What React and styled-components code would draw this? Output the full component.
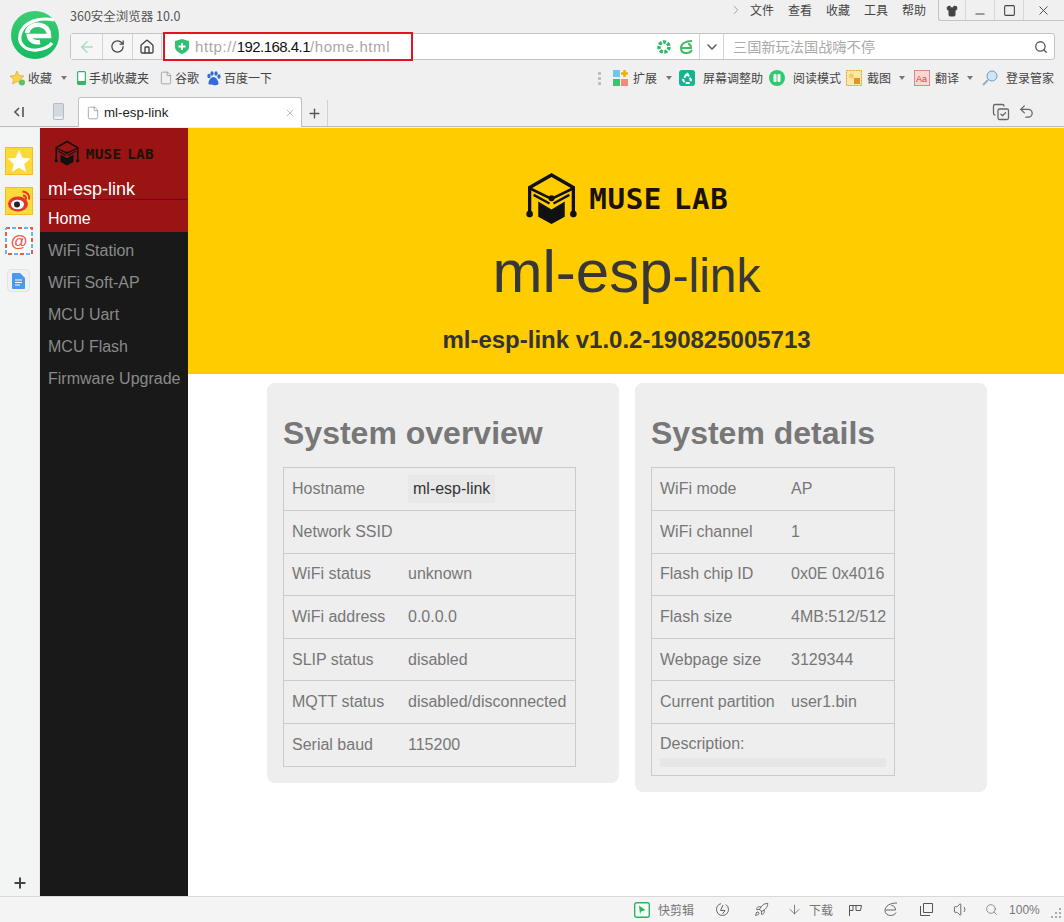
import React from "react";
import styled, { createGlobalStyle } from "styled-components";
import {
  ArrowLeft, RotateCw, Home as HomeIcon, ChevronDown, ChevronRight, Search, Plus, X, Minus, Square, Shirt,
  File, Undo2, ArrowDown, Rocket, Volume1, CopyCheck,
} from "lucide-react";

const Global = createGlobalStyle`
  html, body { margin: 0; padding: 0; background: #fff; }
  * { box-sizing: border-box; }
  body { font-family: "Liberation Sans", Arial, sans-serif; overflow: hidden; }
`;

const CJK = `"Noto Sans CJK SC", "Liberation Sans", sans-serif`;

const Shell = styled.div`
  width: 1064px; height: 922px; display: flex; flex-direction: column; overflow: hidden;
`;
const Chrome = styled.header`
  height: 128px; flex: none; background: #f0f0f0; display: flex; flex-direction: column;
`;
const TopArea = styled.div`
  display: flex; height: 61px; padding-left: 11px;
`;
const BrandMark = styled.svg`
  width: 48px; height: 48px; margin-top: 11px; flex: none;
`;
const TopColumn = styled.div`
  margin-left: 11px; flex: 1; display: flex; flex-direction: column; min-width: 0;
`;
const TitleRow = styled.div`
  height: 33px; display: flex; align-items: flex-start; justify-content: space-between;
`;
const Title = styled.div`
  font: 12.5px/14px ${CJK}; color: #555; margin-top: 9px;
`;
const MenuArea = styled.div`
  display: flex; align-items: flex-start;
`;
const Menu = styled.nav`
  display: flex; gap: 14px; align-items: center; height: 20px; margin-right: 12px; color: #444;
  font: 12px/20px ${CJK};
  svg { color: #888; margin-right: -7px; }
`;
const WindowButtons = styled.div`
  display: flex; height: 21px; width: 126px; border: 1px solid #c4c4c4; border-top: none; border-right: none;
  border-radius: 0 0 0 3px; color: #444;
`;
const WindowButton = styled.div`
  flex: ${p => p.$w ? `0 0 ${p.$w}px` : "1"}; display: flex; align-items: center; justify-content: center; padding-top: 1px;
  border-right: 1px solid ${p => p.$last ? "transparent" : "#d8d8d8"};
`;
const LowMinus = styled(Minus)`
  transform: translateY(3px);
`;
const AddressBar = styled.div`
  height: 27px; width: 985px; display: flex; background: #fff; border: 1px solid #c4c4c4; border-radius: 3px;
`;
const NavButton = styled.div`
  width: ${p => p.$w}px; flex: none; background: #f6f6f6; border-right: 1px solid #d4d4d4; display: flex;
  align-items: center; justify-content: center; color: ${p => p.$c || "#444"};
`;
const UrlCell = styled.div`
  flex: 1; position: relative; display: flex; align-items: center; padding-left: 13px; gap: 6px;
`;
const Highlight = styled.div`
  position: absolute; left: 1px; top: -2px; width: 250px; height: 29px; border: 2px solid #e81123; pointer-events: none;
`;
const Url = styled.div`
  font: 15px/25px "Liberation Sans", Arial, sans-serif; color: #a8a8a8; letter-spacing: .6px;
  b { font-weight: normal; color: #111; letter-spacing: -.55px; }
`;
const UrlTools = styled.div`
  margin-left: auto; margin-right: 5px; display: flex; gap: 8px; align-items: center;
`;
const Drop = styled.div`
  width: 25px; flex: none; border-left: 1px solid #d4d4d4; border-right: 1px solid #d4d4d4; display: flex;
  align-items: center; justify-content: center; color: #555;
`;
const SearchCell = styled.div`
  width: 330px; flex: none; display: flex; align-items: center; justify-content: space-between; padding: 0 6px 0 9px;
  font: 14.2px/25px ${CJK}; color: #a9a9a9;
  svg { color: #555; }
`;
const BookmarkRow = styled.div`
  height: 24px; margin-top: 5px; flex: none; display: flex; align-items: center; justify-content: space-between; padding: 0 10px 0 10px;
`;
const BarGroup = styled.div`
  display: flex; align-items: center;
`;
const Item = styled.div`
  display: flex; align-items: center; gap: ${p => p.$gap ?? 4}px; margin-left: ${p => p.$ml ?? 0}px;
  font: 12px/16px ${CJK}; color: #444; white-space: nowrap;
`;
const Caret = styled.span`
  width: 0; height: 0; border: 3.5px solid transparent; border-top: 4px solid #777; border-bottom: 0;
  margin-left: ${p => p.$ml ?? 9}px;
`;
const Grip = styled.span`
  width: 3px; height: 15px; margin-right: 12px;
  background: radial-gradient(circle, #bdbdbd 1.4px, transparent 1.5px) 0 0/3px 5px;
`;
const TabRow = styled.div`
  height: 30px; margin-top: 7px; flex: none; display: flex; align-items: flex-end; position: relative;
  border-bottom: 1px solid #bcbcbc;
`;
const TabLead = styled.div`
  width: 78px; height: 29px; flex: none; display: flex; align-items: center; color: #555; padding-left: 13px; gap: 28px;
`;
const Tab = styled.div`
  width: 224px; height: 30px; background: #fff; border: 1px solid #c0c0c0; border-bottom: none; border-radius: 3px 3px 0 0;
  display: flex; align-items: center; padding: 0 5px 0 7px; gap: 4px; font: 13.3px "Liberation Sans", Arial, sans-serif; color: #222;
  margin-bottom: -1px; position: relative; z-index: 1;
  svg:first-child { color: #888; }
  svg:last-child { color: #999; margin-left: auto; }
`;
const NewTab = styled.div`
  width: 26px; height: 26px; margin-top: 3px; display: flex; align-items: center; justify-content: center; color: #555; border-right: 1px solid #d0d0d0;
`;
const TabTools = styled.div`
  margin-left: auto; margin-right: 29px; display: flex; gap: 8px; color: #666; height: 29px; align-items: center;
`;
const Body = styled.div`
  flex: 1; display: flex; min-height: 0;
`;
const Rail = styled.aside`
  width: 40px; flex: none; background: #f3f5f5; border-right: 1px solid #e6e8e8; display: flex; flex-direction: column; align-items: flex-start; padding: 19px 0 0 5px;
`;
const RailTile = styled.div`
  width: 28px; height: 28px; margin-bottom: 12px; display: flex; align-items: center; justify-content: center; flex: none;
  background: ${p => p.$bg || "transparent"}; border: ${p => p.$border || "none"};
`;
const DocTile = styled.div`
  width: 23px; height: 23px; border: 1px solid #e2e4e4; border-radius: 4px; background: #f0f0f0; display: flex; align-items: center; justify-content: center; margin: 2px 0 0 2px;
`;
const RailAdd = styled.div`
  margin-top: auto; margin-bottom: 5px; margin-left: 7px; color: #444; display: flex;
`;
const Sidebar = styled.nav`
  width: 148px; flex: none; background: #191919; display: flex; flex-direction: column;
`;
const SideHead = styled.div`
  height: 72px; background: #9b1414; padding: 12px 0 0 14px; border-bottom: 1px solid #3a2020; display: flex; flex-direction: column;
`;
const SideTitle = styled.div`
  margin: 8px 0 0 -6px; font-size: 18px; line-height: 30px; color: #fff;
`;
const NavItem = styled.div`
  height: 32px; padding-left: 8px; font-size: 16px; line-height: 37px; color: ${p => p.$active ? "#fff" : "#8a8a8a"};
  background: ${p => p.$active ? "#9b1414" : "transparent"}; white-space: nowrap;
`;
const Main = styled.main`
  flex: 1; display: flex; flex-direction: column; min-width: 0;
`;
const Hero = styled.section`
  height: 246px; flex: none; background: #ffcc00; display: flex; flex-direction: column; align-items: center; padding: 44px 0 0 1px; color: #333;
`;
const Heading = styled.h1`
  margin: 11px 0 0; font-size: 60px; line-height: 72px; font-weight: normal; color: #373737; white-space: nowrap;
  span { font-size: 48px; }
`;
const Version = styled.h2`
  margin: 13px 0 0; font-size: 24px; line-height: 30px; font-weight: bold; color: #333;
`;
const LogoWrap = styled.div`
  display: flex; align-items: center; gap: ${p => p.$size * 0.22}px; height: ${p => p.$size}px; color: #111;
`;
const LogoText = styled.span`
  font: bold ${p => p.$size * 0.55}px/1 "DejaVu Sans Mono", monospace;
  letter-spacing: ${p => p.$size * 0.012}px; word-spacing: ${p => p.$size * -0.12}px; white-space: nowrap;
  color: #1a1208; margin-top: ${p => p.$size * 0.05}px;
`;
const Cards = styled.div`
  display: flex; gap: 16px; align-items: flex-start; padding: 9px 0 0 79px;
`;
const Card = styled.article`
  width: 352px; background: #eee; border-radius: 8px; padding: 32px 16px 16px;
`;
const CardTitle = styled.h3`
  margin: 0 0 15.4px; font-size: 32px; line-height: 37px; font-weight: bold; color: #777;
`;
const Table = styled.div`
  border: 1px solid #cbcbcb; width: ${p => p.$w}px;
`;
const Row = styled.div`
  height: 42.6px; display: flex; align-items: center; border-bottom: 1px solid #cbcbcb;
  &:last-child { border-bottom: none; height: 42px; }
`;
const Label = styled.div`
  width: ${p => p.$w}px; padding-left: 8px; font-size: 16px; color: #777; flex: none; white-space: nowrap;
`;
const Value = styled.div`
  font-size: 16px; color: #777; white-space: nowrap;
`;
const Code = styled.span`
  display: inline-block; background: #e8e8e8; color: #333; padding: 0 5px; line-height: 28px; border-radius: 2px;
`;
const DescRow = styled.div`
  padding: 11px 8px 0; font-size: 16px; line-height: 18px; color: #777; height: 51px;
`;
const DescBar = styled.div`
  height: 9px; margin-top: 5px; background: #e6e6e6; border-radius: 2px;
`;
const StatusBar = styled.footer`
  height: 26px; flex: none; background: #f4f4f4; border-top: 1px solid #d8d8d8; display: flex; align-items: center; padding-left: 634px;
  color: #777; position: relative;
`;
const StatusItem = styled.div`
  display: flex; align-items: center; gap: ${p => p.$gap ?? 8}px; margin-right: ${p => p.$mr ?? 0}px; font: 12px/16px ${CJK}; color: #777; flex: none;
`;
const Percent = styled.span`
  font: 12px "Liberation Sans", Arial, sans-serif; color: #777;
`;
const Resize = styled.svg`
  position: absolute; right: 2px; bottom: 3px; width: 11px; height: 11px;
`;

const Brand = () => (
  <BrandMark viewBox="0 0 48 48">
    <defs>
      <linearGradient id="g360" x1="0" y1="0" x2="0" y2="1">
        <stop offset="0" stopColor="#3ccd72" /><stop offset="1" stopColor="#16bb62" />
      </linearGradient>
    </defs>
    <circle cx="24" cy="24" r="24" fill="url(#g360)" />
    <path d="M43 9C30 6 12 10 9 24c-2 10 7 16 17 15 7-1 12-3 15-7" fill="none" stroke="#fff" strokeWidth="3.2" />
    <path d="M16 22c1-6 7-9 13-8 6 1 9 5 9 11H18c1 5 6 7 11 6" fill="none" stroke="#fff" strokeWidth="4.5" />
  </BrandMark>
);

const Cube = ({ size }) => (
  <svg width={size} height={size} viewBox="70 35 160 160" style={{ flex: "none" }}>
    <g fill="none" stroke="#111" strokeWidth="10">
      <path d="M84 160V82l66-38 66 38v78" />
      <path d="M84 84l66 32 66-32" strokeWidth="8" />
      <path d="M96 104l48 26M204 104l-48 26" strokeWidth="7" />
    </g>
    <path d="M110 124l40 24 40-24v46l-40 22-40-22z" fill="#111" />
    <circle cx="150" cy="114" r="9" fill="#111" />
    <circle cx="84" cy="162" r="10" fill="#111" /><circle cx="216" cy="162" r="10" fill="#111" />
  </svg>
);

const MuseLogo = ({ size }) => (
  <LogoWrap $size={size}>
    <Cube size={size} />
    <LogoText $size={size}>MUSE LAB</LogoText>
  </LogoWrap>
);

const overview = [
  ["Hostname", "ml-esp-link", true], ["Network SSID", ""], ["WiFi status", "unknown"], ["WiFi address", "0.0.0.0"],
  ["SLIP status", "disabled"], ["MQTT status", "disabled/disconnected"], ["Serial baud", "115200"],
];
const details = [
  ["WiFi mode", "AP"], ["WiFi channel", "1"], ["Flash chip ID", "0x0E 0x4016"], ["Flash size", "4MB:512/512"],
  ["Webpage size", "3129344"], ["Current partition", "user1.bin"],
];
const navs = ["WiFi Station", "WiFi Soft-AP", "MCU Uart", "MCU Flash", "Firmware Upgrade"];

export default function App() {
  return (
    <Shell>
      <Global />
      <Chrome>
        <TopArea>
          <Brand />
          <TopColumn>
            <TitleRow>
              <Title>360安全浏览器 10.0</Title>
              <MenuArea>
                <Menu>
                  <ChevronRight size={14} strokeWidth={1.3} />
                  <span>文件</span><span>查看</span><span>收藏</span><span>工具</span><span>帮助</span>
                </Menu>
                <WindowButtons>
                  <WindowButton $w={27}><Shirt size={12} fill="#444" /></WindowButton>
                  <WindowButton $w={29}><LowMinus size={14} /></WindowButton>
                  <WindowButton $w={29}><Square size={13} /></WindowButton>
                  <WindowButton $last><X size={15} strokeWidth={1.5} /></WindowButton>
                </WindowButtons>
              </MenuArea>
            </TitleRow>
            <AddressBar>
              <NavButton $w={32} $c="#a8dfc0"><ArrowLeft size={18} strokeWidth={2} /></NavButton>
              <NavButton $w={30}><RotateCw size={15} strokeWidth={2} /></NavButton>
              <NavButton $w={29}><HomeIcon size={16} strokeWidth={2} /></NavButton>
              <UrlCell>
                <Highlight />
                <svg width="14" height="15" viewBox="0 0 14 15">
                  <path d="M0 2l7-2 7 2v6c0 3-3 5.500-7 7-4-1.500-7-4-7-7z" fill="#2fc272" />
                  <path d="M7 4v7M3.500 7.500h7" stroke="#fff" strokeWidth="2" />
                </svg>
                <Url>http://<b>192.168.4.1</b>/home.html</Url>
                <UrlTools>
                  <svg width="14" height="14" viewBox="0 0 14 14">
                    <circle cx="7" cy="7" r="5" fill="none" stroke="#2fb868" strokeWidth="3.500" strokeDasharray="3 1.400" />
                  </svg>
                  <svg width="15" height="14" viewBox="0 0 15 14">
                    <path d="M13 1C6 1 2 4 2 8c0 3 2 5 5 5 3 0 5-1 6-3M3 8h9c0-2-1-4-3-4" fill="none" stroke="#42bd5e" strokeWidth="2" />
                  </svg>
                </UrlTools>
              </UrlCell>
              <Drop><ChevronDown size={16} strokeWidth={2.2} /></Drop>
              <SearchCell>
                <span>三国新玩法国战嗨不停</span>
                <Search size={14} strokeWidth={2.2} />
              </SearchCell>
            </AddressBar>
          </TopColumn>
        </TopArea>
        <BookmarkRow>
          <BarGroup>
            <Item $gap={3}>
              <svg width="15" height="16" viewBox="0 0 15 16">
                <path d="M7 1l2 4.500 5 .5-3.700 3.300L11.400 14 7 11.500 2.600 14l1.100-4.700L0 6l5-.5z" fill="#fbd250" stroke="#dba92a" strokeWidth=".7" />
                <circle cx="12" cy="12.500" r="3" fill="#5ec25e" />
              </svg>
              收藏
            </Item>
            <Caret />
            <Item $ml={10} $gap={3}>
              <svg width="9" height="14" viewBox="0 0 9 14">
                <rect x=".6" y=".6" width="7.800" height="12.800" rx="1" fill="#fff" stroke="#2fb868" strokeWidth="1.200" />
                <rect x=".6" y="10" width="7.800" height="3.400" fill="#2fb868" />
              </svg>
              手机收藏夹
            </Item>
            <Item $ml={10} $gap={2}><File size={14} color="#888" strokeWidth={1.2} />谷歌</Item>
            <Item $ml={7} $gap={3}>
              <svg width="15" height="15" viewBox="0 0 15 15" fill="#2f6bdc">
                <ellipse cx="3" cy="5" rx="1.700" ry="2.200" /><ellipse cx="6" cy="2.500" rx="1.600" ry="2.200" />
                <ellipse cx="10" cy="2.500" rx="1.600" ry="2.200" /><ellipse cx="13" cy="5.500" rx="1.600" ry="2.200" />
                <path d="M7.500 6c2.500 0 5 4 5 6s-2 2.500-5 2-5 .5-5-2 2.500-6 5-6z" />
              </svg>
              百度一下
            </Item>
          </BarGroup>
          <BarGroup>
            <Grip />
            <Item $gap={5}>
              <svg width="15" height="16" viewBox="0 0 15 16">
                <rect x="0" y="0" width="7" height="7" fill="#6cc7f5" /><rect x="0" y="9" width="7" height="7" fill="#3cc46c" />
                <rect x="8" y="9" width="7" height="7" fill="#f58a7a" /><path d="M11.500 0v7M8 3.500h7" stroke="#f0b000" strokeWidth="2.500" />
              </svg>
              扩展
            </Item>
            <Caret />
            <Item $ml={7} $gap={8}>
              <svg width="16" height="16" viewBox="0 0 16 16">
                <rect width="16" height="16" rx="3" fill="#12b58f" />
                <path d="M8 3l4 7-2 3H6l-2-3z" fill="none" stroke="#fff" strokeWidth="2" strokeDasharray="4 1.500" />
              </svg>
              屏幕调整助
            </Item>
            <Item $ml={6} $gap={8}>
              <svg width="16" height="16" viewBox="0 0 16 16">
                <circle cx="8" cy="8" r="8" fill="#2dcb6c" /><rect x="4.500" y="4" width="3" height="8" rx="1" fill="#fff" /><rect x="8.500" y="4" width="3" height="8" rx="1" fill="#fff" />
              </svg>
              阅读模式
            </Item>
            <Item $ml={5} $gap={5}>
              <svg width="16" height="16" viewBox="0 0 16 16">
                <rect x=".5" y=".5" width="15" height="15" fill="#fbe7a8" stroke="#e0a020" strokeDasharray="2 1" />
                <circle cx="5.500" cy="6" r="2.500" fill="#f7cf6a" /><rect x="8" y="8" width="6" height="6" fill="#d9962a" />
              </svg>
              截图
            </Item>
            <Caret $ml={8} />
            <Item $ml={9} $gap={5}>
              <svg width="16" height="16" viewBox="0 0 16 16" fill="#f9d7d3" style={{ flex: "none" }}>
                <rect x=".5" y=".5" width="15" height="15" stroke="#d88" />
                <text x="2" y="11.500" fontSize="9" fill="#c44" fontFamily="Liberation Sans">Aa</text>
              </svg>
              翻译
            </Item>
            <Caret $ml={8} />
            <Item $ml={9} $gap={8}>
              <svg width="16" height="16" viewBox="0 0 16 16">
                <circle cx="10" cy="6" r="5" fill="#cfe4f5" stroke="#6f9cc5" /><path d="M6 10l-5 5" stroke="#a9a9a9" strokeWidth="2" />
              </svg>
              登录管家
            </Item>
          </BarGroup>
        </BookmarkRow>
        <TabRow>
          <TabLead>
            <svg width="12" height="12" viewBox="0 0 12 12" fill="none" stroke="#555" strokeWidth="1.600" style={{ flex: "none" }}>
              <path d="M6 2L2 6l4 4M10 1v10" />
            </svg>
            <svg width="11" height="17" viewBox="0 0 11 17" style={{ flex: "none" }}>
              <rect x=".5" y=".5" width="10" height="16" rx="1" fill="#d6d8dc" stroke="#a8bcd4" />
              <rect x="1.500" y="13.500" width="8" height="2.500" fill="#eef1f5" />
            </svg>
          </TabLead>
          <Tab>
            <File size={14} strokeWidth={1.2} />
            ml-esp-link
            <X size={12} strokeWidth={1.3} />
          </Tab>
          <NewTab><Plus size={15} strokeWidth={2.2} /></NewTab>
          <TabTools>
            <CopyCheck size={18} strokeWidth={1.7} />
            <Undo2 size={17} strokeWidth={1.8} />
          </TabTools>
        </TabRow>
      </Chrome>
      <Body>
        <Rail>
          <RailTile $bg="#ffd83a" $border="1px solid #f6bb20">
            <svg width="24" height="24" viewBox="0 0 22 22"><path d="M11 1l3 7 7.500.7-5.700 5 1.800 7.300L11 17.200 4.400 21l1.800-7.300-5.700-5L8 8z" fill="#fff" /></svg>
          </RailTile>
          <RailTile $bg="#ffd83a" $border="1px solid #f6bb20">
            <svg width="25" height="22" viewBox="0 0 24 22">
              <ellipse cx="10.500" cy="14" rx="10" ry="7.500" fill="#e6352b" />
              <ellipse cx="10" cy="14.500" rx="6.500" ry="4.800" fill="#fff" /><circle cx="9.500" cy="14.500" r="3" fill="#222" />
              <path d="M15 1.500c4.500 0 7.500 3.500 6.500 8M15.500 5.500c2 0 3.500 1.500 3 4" fill="none" stroke="#e6352b" strokeWidth="2" />
            </svg>
          </RailTile>
          <RailTile>
            <svg width="28" height="28" viewBox="0 0 28 28">
              <rect x="1" y="1" width="26" height="26" fill="#fff" stroke="#f0584a" strokeWidth="2" strokeDasharray="4 8" />
              <rect x="1" y="1" width="26" height="26" fill="none" stroke="#62b5f0" strokeWidth="2" strokeDasharray="4 8" strokeDashoffset="6" />
              <text x="14" y="20" textAnchor="middle" fontSize="17" fontWeight="bold" fill="#f0574a" fontFamily="Liberation Sans">@</text>
            </svg>
          </RailTile>
          <DocTile>
            <svg width="13" height="16" viewBox="0 0 13 16">
              <path d="M0 1a1 1 0 011-1h7l5 5v10a1 1 0 01-1 1H1a1 1 0 01-1-1z" fill="#4a98f0" />
              <path d="M3 7h7M3 9.500h7M3 12h5" stroke="#fff" />
            </svg>
          </DocTile>
          <RailAdd><Plus size={16} strokeWidth={3} /></RailAdd>
        </Rail>
        <Sidebar>
          <SideHead>
            <MuseLogo size={26} />
            <SideTitle>ml-esp-link</SideTitle>
          </SideHead>
          <NavItem $active>Home</NavItem>
          {navs.map(n => <NavItem key={n}>{n}</NavItem>)}
        </Sidebar>
        <Main>
          <Hero>
            <MuseLogo size={53} />
            <Heading>ml-esp<span>-link</span></Heading>
            <Version>ml-esp-link v1.0.2-190825005713</Version>
          </Hero>
          <Cards>
            <Card>
              <CardTitle>System overview</CardTitle>
              <Table $w={293}>
                {overview.map(([l, v, code]) => (
                  <Row key={l}>
                    <Label $w={124}>{l}</Label>
                    <Value>{code ? <Code>{v}</Code> : v}</Value>
                  </Row>
                ))}
              </Table>
            </Card>
            <Card>
              <CardTitle>System details</CardTitle>
              <Table $w={244}>
                {details.map(([l, v]) => (
                  <Row key={l}>
                    <Label $w={139}>{l}</Label>
                    <Value>{v}</Value>
                  </Row>
                ))}
                <DescRow>Description:<DescBar /></DescRow>
              </Table>
            </Card>
          </Cards>
        </Main>
      </Body>
      <StatusBar>
        <StatusItem $mr={21}>
          <svg width="16" height="16" viewBox="0 0 16 16">
            <rect x=".7" y=".7" width="14.600" height="14.600" rx="2" fill="#fff" stroke="#22b859" strokeWidth="1.400" />
            <path d="M5 3.500L11.500 8 7 9.500 6 12.500z" fill="#22b859" />
          </svg>
          快剪辑
        </StatusItem>
        <StatusItem $mr={24}>
          <svg width="15" height="15" viewBox="0 0 15 15" fill="none" stroke="#666">
            <circle cx="7.500" cy="7.500" r="6" strokeDasharray="26 5" /><path d="M8 3L5.500 8.500H10L7.500 12" />
          </svg>
        </StatusItem>
        <StatusItem $mr={18}><Rocket size={15} strokeWidth={1.3} color="#555" /></StatusItem>
        <StatusItem $mr={15} $gap={7}><ArrowDown size={15} strokeWidth={1.2} color="#555" />下载</StatusItem>
        <StatusItem $mr={20}>
          <svg width="15" height="14" viewBox="0 0 15 14" fill="none" stroke="#555">
            <path d="M1.500 13V2.500h12L12.500 7.500H8V2.500M5 2.500v5H1.500" />
          </svg>
        </StatusItem>
        <StatusItem $mr={22}>
          <svg width="15" height="15" viewBox="0 0 15 15" fill="none" stroke="#666">
            <path d="M14 1C7 1 2 4 2 8.500c0 3 2.500 5 5.500 5 2.500 0 4.500-1 5.500-3M2.500 8h10c0-2.500-1.500-4.500-4-4.500" />
          </svg>
        </StatusItem>
        <StatusItem $mr={20}>
          <svg width="13" height="13" viewBox="0 0 13 13" fill="none" stroke="#555">
            <path d="M3.500.5h9v9h-9zM.5 3v9.500H10" />
          </svg>
        </StatusItem>
        <StatusItem $mr={15}><Volume1 size={17} strokeWidth={1.2} color="#555" /></StatusItem>
        <StatusItem $mr={11}><Search size={13} strokeWidth={1.4} color="#777" /></StatusItem>
        <Percent>100%</Percent>
        <Resize viewBox="0 0 11 11" fill="#aaa">
          <rect x="8" y="8" width="2" height="2" /><rect x="4" y="8" width="2" height="2" /><rect x="0" y="8" width="2" height="2" />
          <rect x="8" y="4" width="2" height="2" /><rect x="4" y="4" width="2" height="2" /><rect x="8" y="0" width="2" height="2" />
        </Resize>
      </StatusBar>
    </Shell>
  );
}
